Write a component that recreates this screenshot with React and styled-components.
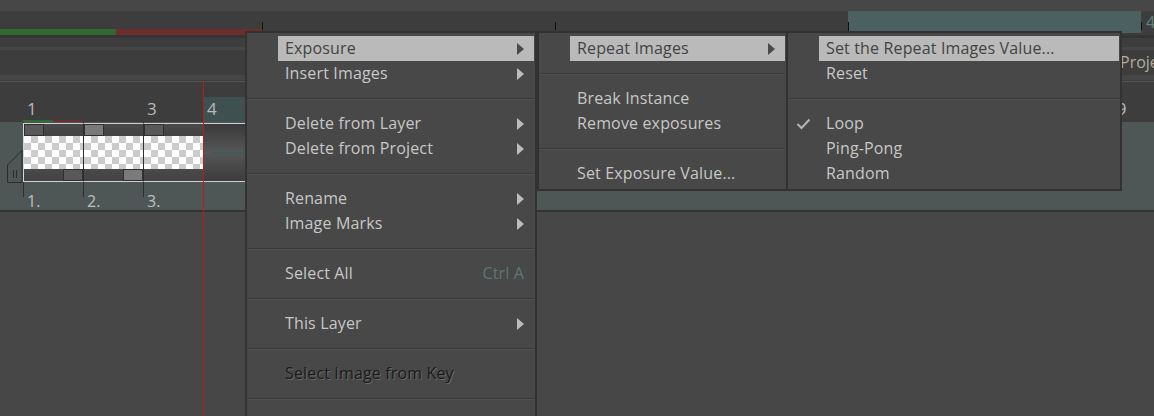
import React from "react";
import styled, { createGlobalStyle } from "styled-components";

const GlobalStyle = createGlobalStyle`
  html, body { margin: 0; padding: 0; background: #474747; }
  body { font-family: "Open Sans", "Noto Sans", sans-serif; }
`;

const Screen = styled.div`
  position: relative;
  width: 1154px;
  height: 416px;
  overflow: hidden;
  background: #474747;
  display: flex;
  flex-direction: column;
`;

const Band = styled.div`
  flex-shrink: 0;
  height: ${p => p.$h}px;
  background: ${p => p.$bg};
`;

/* header with range ticks */
const HeaderRow = styled.div`
  flex-shrink: 0;
  height: 24px;
  background: #3d3d3d;
  display: flex;
`;
const HeaderLead = styled.div`
  width: 262px;
  flex-shrink: 0;
  display: flex;
  flex-direction: column;
  justify-content: flex-end;
`;
const Progress = styled.div`
  height: 6px;
  display: flex;
`;
const ProgressPart = styled.div`
  width: ${p => p.$w}px;
  background: ${p => p.$c};
`;
const HeaderCell = styled.div`
  position: relative;
  flex-shrink: 0;
  width: 293px;
  height: 22px;
  background: ${p => (p.$active ? "#4b6161" : "transparent")};
  color: #5f8080;
  font-size: 16px;
  line-height: 22px;
  padding-left: 5px;
  box-sizing: border-box;
  &::before {
    content: "";
    position: absolute;
    left: 0;
    top: 11px;
    width: 1px;
    height: ${p => (p.$active ? 11 : 8)}px;
    background: #111;
  }
`;

const ToolRow = styled.div`
  flex-shrink: 0;
  height: 25px;
  background: #3d3d3d;
  padding-left: 1120px;
  white-space: nowrap;
  overflow: hidden;
  color: #b3ab9f;
  font-size: 16px;
  line-height: 25px;
`;

/* frame ruler */
const Ruler = styled.div`
  flex-shrink: 0;
  height: 25px;
  background: #3d3d3d;
  display: flex;
  padding-left: 23px;
`;
const RulerFrame = styled.div`
  position: relative;
  flex-shrink: 0;
  width: 60px;
  box-sizing: border-box;
  padding-left: 4px;
  background: ${p => (p.$active ? "#3f5050" : "transparent")};
  color: #b9b9b9;
  font-size: 17px;
  line-height: 24px;
`;
const RangeMark = styled.div`
  position: absolute;
  left: 0;
  bottom: 0;
  display: flex;
  height: 2px;
`;

/* track */
const Track = styled.div`
  flex-shrink: 0;
  height: 88px;
  background: #4f5656;
  display: flex;
  align-items: flex-start;
  border-bottom: 2px solid #343434;
`;
const Handle = styled.div`
  width: 23px;
  flex-shrink: 0;
  padding-top: 28px;
  display: flex;
  justify-content: flex-end;
  svg { display: block; }
`;
const FrameColumn = styled.div`
  flex-shrink: 0;
  width: 60px;
  height: 88px;
  display: flex;
  flex-direction: column;
  background: linear-gradient(#2e2e2e, #2e2e2e) no-repeat 0 0 / 1px 75px;
`;
const CellBody = styled.div`
  margin-top: 1px;
  border-top: 1px solid #cfcfcf;
  border-bottom: 1px solid #cfcfcf;
  border-left: 1px solid ${p => (p.$first ? "#d6d6d6" : "#2e2e2e")};
  display: flex;
  flex-direction: column;
`;
const Strip = styled.div`
  height: 12px;
  background: linear-gradient(#4a4a4a, #424242);
  display: flex;
  justify-content: ${p => (p.$bottom ? "flex-end" : "flex-start")};
`;
const Tab = styled.div`
  width: 20px;
  height: 12px;
  box-sizing: border-box;
  border: 1px solid #2f2f2f;
  background: ${p => (p.$light ? "#7a7a7a" : "#595959")};
`;
const Checker = styled.div`
  height: 33px;
  background-color: #fff;
  background-image: conic-gradient(#cbcbcb 25%, #fff 0 50%, #cbcbcb 0 75%, #fff 0);
  background-size: 14px 14px;
`;
const FrameLabel = styled.div`
  margin-top: 11px;
  padding-left: 4px;
  color: #b8c0c0;
  font-size: 16px;
  line-height: 16px;
`;
const Continuation = styled.div`
  flex-shrink: 0;
  width: 340px;
  height: 57px;
  margin-top: 1px;
  border-top: 1px solid #cfcfcf;
  border-bottom: 1px solid #cfcfcf;
  background: linear-gradient(#3a3a3a, #565656 50%, #3c3c3c);
  display: flex;
  align-items: center;
  padding-left: 9px;
`;
const HoldLine = styled.div`
  width: 40px;
  height: 2px;
  background: #3d5959;
`;

const Playhead = styled.div`
  position: absolute;
  left: 203px;
  top: 82px;
  bottom: 0;
  width: 1px;
  background: #b31f1f;
`;

/* context menus */
const Menu = styled.div`
  position: absolute;
  left: ${p => p.$left}px;
  top: 31px;
  width: ${p => p.$width}px;
  height: ${p => p.$height}px;
  box-sizing: border-box;
  background: #484848;
  border: 2px solid #323232;
  padding: 3px 0;
  font-size: 16px;
  letter-spacing: 0.15px;
`;
const Row = styled.div`
  height: 25px;
  display: flex;
  align-items: stretch;
`;
const Gutter = styled.div`
  width: 31px;
  flex-shrink: 0;
  display: flex;
  align-items: center;
  padding-left: 8px;
  box-sizing: border-box;
`;
const ItemBody = styled.div`
  flex: 1;
  margin-right: 1px;
  display: flex;
  align-items: center;
  padding: 0 10px 2px 7px;
  white-space: nowrap;
  background: ${p => (p.$hl ? "#bababa" : "transparent")};
  color: ${p => (p.$hl ? "#434343" : p.$off ? "#1a1a1a" : "#c7c7c7")};
  text-shadow: ${p => (p.$off ? "1px 1px 0 #6a6a6a" : "none")};
`;
const Shortcut = styled.span`
  margin-left: auto;
  color: #5c7676;
`;
const Arrow = styled.span`
  margin-left: auto;
  margin-top: 2px;
  width: 0;
  height: 0;
  border-top: 6px solid transparent;
  border-bottom: 6px solid transparent;
  border-left: 7px solid ${p => (p.$hl ? "#4a4a4a" : "#bcbcbc")};
`;
const Separator = styled.div`
  height: 25px;
  display: flex;
  align-items: center;
  padding-right: 1px;
  &::after {
    content: "";
    flex: 1;
    height: 1px;
    border-top: 1px solid #3a3a3a;
    background: #515151;
  }
`;

const Check = () => (
  <svg width="15" height="12" viewBox="0 0 15 12">
    <polyline points="1.5,6 5.5,10 13.5,1.5" fill="none" stroke="#b4b4b4" strokeWidth="2" />
  </svg>
);

const MenuItems = ({ items }) =>
  items.map((it, i) =>
    it === "-" ? (
      <Separator key={i} />
    ) : (
      <Row key={i}>
        <Gutter>{it.checked && <Check />}</Gutter>
        <ItemBody $hl={it.hl} $off={it.disabled}>
          {it.label}
          {it.shortcut && <Shortcut>{it.shortcut}</Shortcut>}
          {it.sub && <Arrow $hl={it.hl} />}
        </ItemBody>
      </Row>
    )
  );

const mainMenu = [
  { label: "Exposure", sub: true, hl: true },
  { label: "Insert Images", sub: true },
  "-",
  { label: "Delete from Layer", sub: true },
  { label: "Delete from Project", sub: true },
  "-",
  { label: "Rename", sub: true },
  { label: "Image Marks", sub: true },
  "-",
  { label: "Select All", shortcut: "Ctrl A" },
  "-",
  { label: "This Layer", sub: true },
  "-",
  { label: "Select Image from Key", disabled: true },
  "-",
];

const exposureMenu = [
  { label: "Repeat Images", sub: true, hl: true },
  "-",
  { label: "Break Instance" },
  { label: "Remove exposures" },
  "-",
  { label: "Set Exposure Value..." },
];

const repeatMenu = [
  { label: "Set the Repeat Images Value...", hl: true },
  { label: "Reset" },
  "-",
  { label: "Loop", checked: true },
  { label: "Ping-Pong" },
  { label: "Random" },
];

const rulerFrames = Array.from({ length: 19 }, (_, i) => i + 1);
const cells = [
  { n: 1, topLight: false, bottom: "dark" },
  { n: 2, topLight: true, bottom: "light" },
  { n: 3, topLight: false, bottom: null },
];

const App = () => (
  <Screen>
    <GlobalStyle />
    <Band $h={11} $bg="#474747" />
    <HeaderRow>
      <HeaderLead>
        <Progress>
          <ProgressPart $w={116} $c="#2f6a31" />
          <ProgressPart $w={146} $c="#6c2d2d" />
        </Progress>
      </HeaderLead>
      <HeaderCell />
      <HeaderCell />
      <HeaderCell $active />
      <HeaderCell>4</HeaderCell>
    </HeaderRow>
    <Band $h={3} $bg="#343434" />
    <Band $h={9} $bg="#3d3d3d" />
    <Band $h={3} $bg="#464646" />
    <ToolRow>Project</ToolRow>
    <Band $h={5} $bg="#464646" />
    <Band $h={1} $bg="#3d3d3d" />
    <Band $h={1} $bg="#535353" />
    <Band $h={15} $bg="#3d3d3d" />
    <Ruler>
      {rulerFrames.map(n => (
        <RulerFrame key={n} $active={n === 4}>
          {n % 2 === 1 || n === 4 ? n : ""}
          {n === 1 && (
            <RangeMark>
              <ProgressPart $w={30} $c="#2f6a31" />
              <ProgressPart $w={30} $c="#6c2d2d" />
            </RangeMark>
          )}
        </RulerFrame>
      ))}
    </Ruler>
    <Track>
      <Handle>
        <svg width="16" height="33" viewBox="0 0 16 33">
          <path d="M15 0.5 L0.5 15 L0.5 32.5 L15 32.5 Z" fill="#4f5656" stroke="#2c2c2c" />
          <line x1="6.5" y1="20" x2="6.5" y2="28" stroke="#2c2c2c" />
          <line x1="9.5" y1="20" x2="9.5" y2="28" stroke="#2c2c2c" />
        </svg>
      </Handle>
      {cells.map((c, i) => (
        <FrameColumn key={c.n}>
          <CellBody $first={i === 0}>
            <Strip>
              <Tab $light={c.topLight} />
            </Strip>
            <Checker />
            <Strip $bottom>{c.bottom && <Tab $light={c.bottom === "light"} />}</Strip>
          </CellBody>
          <FrameLabel>{c.n}.</FrameLabel>
        </FrameColumn>
      ))}
      <Continuation>
        <HoldLine />
      </Continuation>
    </Track>
    <Playhead />

    <Menu $left={245} $width={292} $height={400}>
      <MenuItems items={mainMenu} />
    </Menu>
    <Menu $left={537} $width={251} $height={160}>
      <MenuItems items={exposureMenu} />
    </Menu>
    <Menu $left={786} $width={336} $height={160}>
      <MenuItems items={repeatMenu} />
    </Menu>
  </Screen>
);

export default App;
